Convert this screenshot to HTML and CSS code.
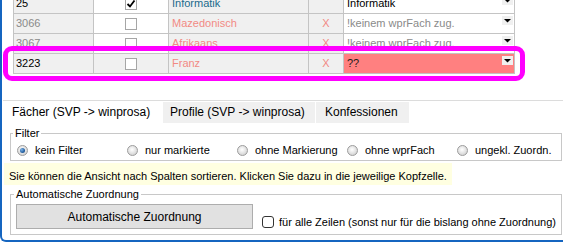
FILE: index.html
```html
<!DOCTYPE html>
<html lang="de">
<head>
<meta charset="utf-8">
<title>Fächer</title>
<link rel="stylesheet" href="styles.css">
</head>
<body>
<div class="window">
  <div class="gridview">
    <div class="grid">
      <div class="row">
        <div class="cell id dark">25</div>
        <div class="cell chk"><span class="box"><svg width="10" height="10" viewBox="0 0 10 10"><path d="M1.5 5 L4 7.5 L8.5 1.5" fill="none" stroke="#000" stroke-width="1.8"/></svg></span></div>
        <div class="cell name teal">Informatik</div>
        <div class="cell x"></div>
        <div class="cell combo dark"><span class="ctext">Informatik</span><span class="dd"><svg width="7" height="4" viewBox="0 0 7 4"><polygon points="0,0 7,0 3.5,3.5" fill="#000"/></svg></span></div>
      </div>
      <div class="row">
        <div class="cell id">3066</div>
        <div class="cell chk"><span class="box"></span></div>
        <div class="cell name">Mazedonisch</div>
        <div class="cell x">X</div>
        <div class="cell combo"><span class="ctext">!keinem wprFach zug.</span><span class="dd"><svg width="7" height="4" viewBox="0 0 7 4"><polygon points="0,0 7,0 3.5,3.5" fill="#000"/></svg></span></div>
      </div>
      <div class="row">
        <div class="cell id">3067</div>
        <div class="cell chk"><span class="box"></span></div>
        <div class="cell name">Afrikaans</div>
        <div class="cell x">X</div>
        <div class="cell combo"><span class="ctext">!keinem wprFach zug.</span><span class="dd"><svg width="7" height="4" viewBox="0 0 7 4"><polygon points="0,0 7,0 3.5,3.5" fill="#000"/></svg></span></div>
      </div>
      <div class="row sel">
        <div class="cell id dark">3223</div>
        <div class="cell chk"><span class="box"></span></div>
        <div class="cell name">Franz</div>
        <div class="cell x">X</div>
        <div class="cell combo warn"><span class="ctext">??</span><span class="dd"><svg width="7" height="4" viewBox="0 0 7 4"><polygon points="0,0 7,0 3.5,3.5" fill="#000"/></svg></span></div>
      </div>
    </div>
    <div class="mark"></div>
  </div>

  <div class="tabs">
    <div class="tab active">Fächer (SVP -&gt; winprosa)</div>
    <div class="tab t2">Profile (SVP -&gt; winprosa)</div>
    <div class="tab t3">Konfessionen</div>
  </div>

  <div class="page">
    <fieldset class="group filter">
      <legend>Filter</legend>
      <div class="radios">
        <div class="ropt"><span class="radio on"></span>kein Filter</div>
        <div class="ropt"><span class="radio"></span>nur markierte</div>
        <div class="ropt"><span class="radio"></span>ohne Markierung</div>
        <div class="ropt"><span class="radio"></span>ohne wprFach</div>
        <div class="ropt"><span class="radio"></span>ungekl. Zuordn.</div>
      </div>
    </fieldset>

    <div class="info">Sie können die Ansicht nach Spalten sortieren. Klicken Sie dazu in die jeweilige Kopfzelle.</div>

    <fieldset class="group auto">
      <legend>Automatische Zuordnung</legend>
      <div class="autorow">
        <button class="btn" type="button">Automatische Zuordnung</button>
        <label class="opt"><span class="cbox"></span>für alle Zeilen (sonst nur für die bislang ohne Zuordnung)</label>
      </div>
    </fieldset>
  </div>
</div>
</body>
</html>
```

FILE: styles.css
```css
html, body {
  margin: 0;
  padding: 0;
  background: #fff;
}

.window {
  width: 563px;
  height: 242px;
  box-sizing: border-box;
  border-left: 2px solid #1565c0;
  border-bottom: 2px solid #1565c0;
  border-bottom-left-radius: 6px;
  background: #fff;
  overflow: hidden;
  font-family: "Liberation Sans", Arial, sans-serif;
  color: #000;
}

/* ---------- grid ---------- */
.gridview {
  position: relative;
  height: 100px;
  overflow: hidden;
}

.grid {
  margin: -6px 0 0 11px;
  width: 502px;
}

.row {
  display: grid;
  grid-template-columns: 80px 75px 140px 35px 172px;
  height: 20px;
  box-sizing: border-box;
  border-bottom: 1px solid #c4c4c4;
}

.cell {
  box-sizing: border-box;
  border-left: 1px solid #c4c4c4;
  font-size: 11px;
  line-height: 19px;
  white-space: nowrap;
  overflow: hidden;
  background: #f0f0f0;
}

.cell:last-child {
  border-right: 1px solid #c4c4c4;
}

.id {
  padding-left: 2px;
  color: #8a8a8a;
}

.chk {
  background: #fff;
  display: flex;
  align-items: center;
  justify-content: center;
}

.sel .chk {
  background: #f0f0f0;
}

.box {
  width: 12px;
  height: 12px;
  box-sizing: border-box;
  border: 1px solid #a6a6a6;
  background: #fff;
  display: flex;
  align-items: center;
  justify-content: center;
}

.name {
  padding-left: 3px;
  color: #f28a84;
}

.x {
  text-align: center;
  color: #f28a84;
}

.combo {
  display: flex;
  align-items: flex-start;
  padding-left: 3px;
  padding-right: 1px;
  background: #fff;
  color: #8a8a8a;
}

.ctext {
  flex: 1;
}

.dd {
  width: 11px;
  height: 9px;
  margin-top: 2px;
  background: #f0f0f0;
  display: flex;
  align-items: center;
  justify-content: center;
}

.dark {
  color: #000;
}

.teal {
  color: #1b6a8c;
}

.warn {
  background: #ff8080;
  color: #1a1a1a;
}

.mark {
  position: absolute;
  left: 1px;
  top: 46px;
  width: 522px;
  height: 35px;
  box-sizing: border-box;
  border: 5px solid #ff00ff;
  border-radius: 9px;
}

/* ---------- tabs ---------- */
.tabs {
  display: flex;
  margin-left: 1px;
  height: 23px;
  box-sizing: border-box;
  border-top: 1px solid #dcdcdc;
}

.tab {
  box-sizing: border-box;
  height: 22px;
  font-size: 12px;
  line-height: 21px;
  padding-top: 1px;
  white-space: nowrap;
}

.tab.active {
  width: 160px;
  padding-left: 9px;
  background: #fff;
}

.t2 {
  width: 152px;
  padding-left: 7px;
  margin-top: 1px;
  height: 21px;
  line-height: 19px;
  background: #f0f0f0;
}

.t3 {
  width: 93px;
  padding-left: 9px;
  margin-left: 1px;
  margin-top: 1px;
  height: 21px;
  line-height: 19px;
  background: #f0f0f0;
}

/* ---------- page ---------- */
.page {
  display: flex;
  flex-direction: column;
  align-items: flex-start;
}

.group {
  box-sizing: border-box;
  width: 552px;
  margin: 0 0 0 8px;
  border: 1px solid #c8c8c8;
  min-width: 0;
}

.group legend {
  font-size: 11px;
  line-height: 14px;
  padding: 0 2px;
  color: #000;
}

.filter {
  margin-top: 3px;
  padding: 0 0 0 6px;
}

.filter legend {
  margin-left: -4px;
}

.radios {
  display: grid;
  grid-template-columns: repeat(5, 110px);
  height: 20px;
  align-items: center;
}

.ropt {
  display: flex;
  align-items: center;
  gap: 7px;
  font-size: 11px;
  line-height: 14px;
  white-space: nowrap;
}

.radio {
  width: 11px;
  height: 11px;
  box-sizing: border-box;
  border-radius: 50%;
  border: 1px solid #9c9c9c;
  background: radial-gradient(circle at 45% 40%, #ffffff 0, #ececec 35%, #c6c6c6 100%);
  display: flex;
  align-items: center;
  justify-content: center;
}

.radio.on::after {
  content: "";
  width: 5px;
  height: 5px;
  border-radius: 50%;
  background: radial-gradient(circle at 35% 35%, #7fb4e6 0, #2a67a8 55%, #143e70 100%);
}

.info {
  margin: 2px 0 0 2px;
  height: 22px;
  box-sizing: border-box;
  padding: 6px 5px 0 5px;
  font-size: 11px;
  line-height: 15px;
  background: #ffffe1;
  white-space: nowrap;
}

.auto {
  margin-top: 2px;
  padding: 3px 0 5px 5px;
}

.auto legend {
  margin-left: -2px;
}

.autorow {
  display: flex;
  align-items: flex-end;
}

.btn {
  width: 237px;
  height: 25px;
  box-sizing: border-box;
  margin: 0;
  padding: 0;
  border: 1px solid #adadad;
  background: #e1e1e1;
  font-family: "Liberation Sans", Arial, sans-serif;
  font-size: 12px;
  color: #000;
}

.opt {
  display: flex;
  align-items: center;
  gap: 5px;
  height: 14px;
  margin-left: 9px;
  font-size: 11px;
  line-height: 14px;
  white-space: nowrap;
}

.cbox {
  width: 12px;
  height: 12px;
  box-sizing: border-box;
  border: 1px solid #333;
  border-radius: 3px;
  background: #fff;
}
```
